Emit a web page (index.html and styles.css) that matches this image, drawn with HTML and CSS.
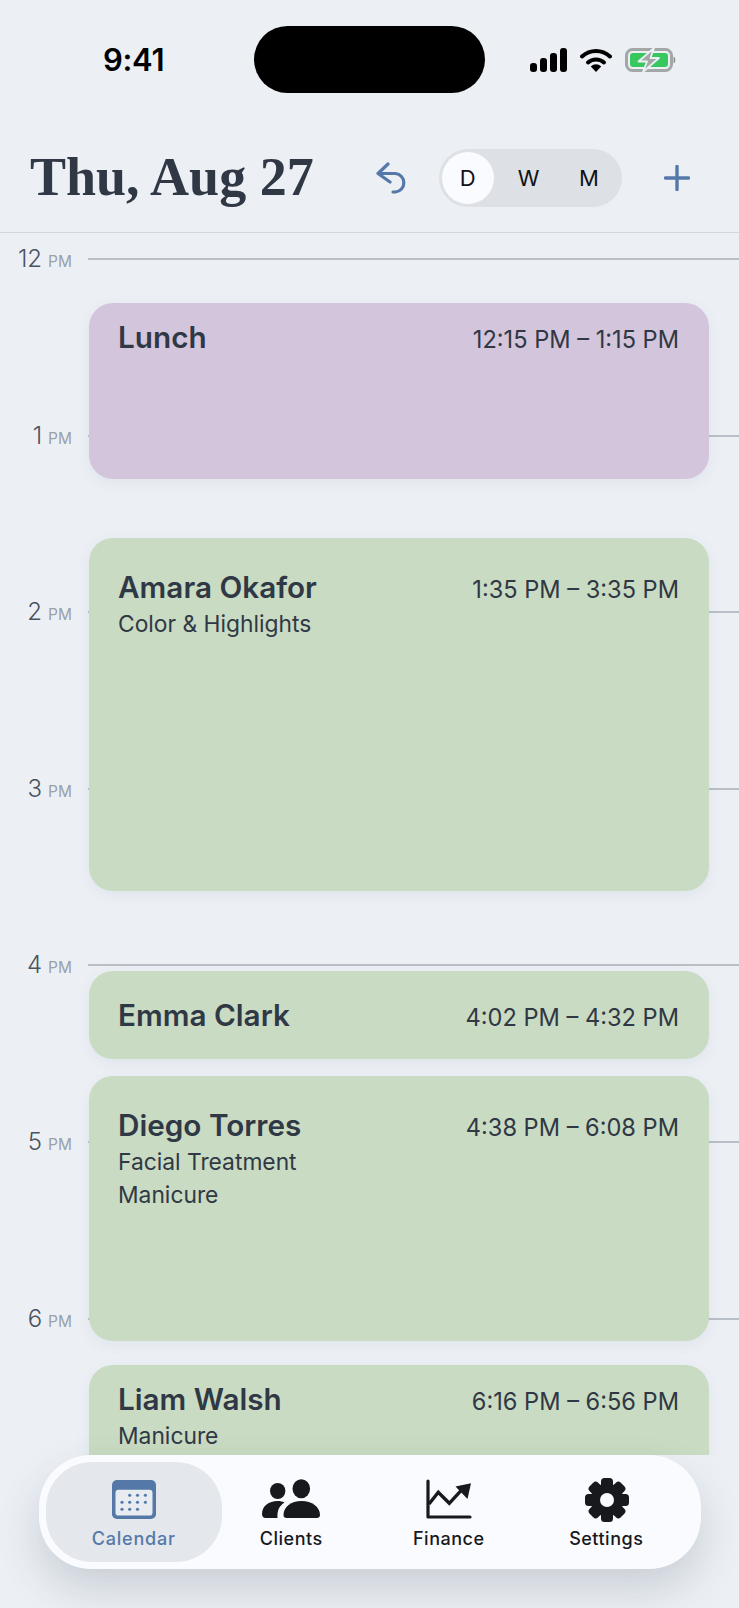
FILE: index.html
```html
<!DOCTYPE html>
<html lang="en">
<head>
<meta charset="utf-8">
<title>Calendar</title>
<link rel="stylesheet" href="styles.css">
</head>
<body>
<div class="phone">
  <div class="status">
    <span class="clock">9:41</span>
    <span class="island"></span>
    <div class="status-icons">
      <svg class="ic-signal" width="37" height="24" viewBox="0 0 37 24"><rect x="0" y="15" width="7" height="9" rx="3"/><rect x="10" y="10" width="7" height="14" rx="3"/><rect x="20" y="5" width="7" height="19" rx="3"/><rect x="30" y="0" width="7" height="24" rx="3"/></svg>
      <svg class="ic-wifi" width="32" height="24" viewBox="0 0 32 24"><path d="M2 8.500C10 1 22 1 30 8.500" fill="none" stroke="#000" stroke-width="4" stroke-linecap="round"/><path d="M8 14.500C12.500 10.500 19.500 10.500 24 14.500" fill="none" stroke="#000" stroke-width="4" stroke-linecap="round"/><path d="M10.800 18.500C14 15.600 18 15.600 21.200 18.500L16 24Z" fill="#000"/></svg>
      <svg class="ic-battery" width="52" height="24" viewBox="0 0 52 24"><rect x="1.500" y="1.500" width="45" height="21" rx="6" fill="none" stroke="#a3a8a7" stroke-width="3"/><rect x="5" y="5" width="38" height="14" rx="3" fill="#37c75f"/><path d="M48.500 8.500c2.500 .5 2.500 6.500 0 7z" fill="#8f9494"/><path d="M29 0L13.500 13.500h8.500l-4 10.500 16-14h-8.500z" fill="#a3a8a7" stroke="#ecf0f5" stroke-width="1.800" stroke-linejoin="round"/></svg>
    </div>
  </div>

  <header class="header">
    <h1 class="title">Thu, Aug 27</h1>
    <svg class="ic-undo" width="32" height="32" viewBox="0 0 32 32"><path d="M12 2L2 11.500L14 20M2 11.500H19.500A9.300 9.300 0 0 1 19.500 30H17" fill="none" stroke="#5479a8" stroke-width="3.200" stroke-linecap="round" stroke-linejoin="round"/></svg>
    <div class="segment">
      <span class="seg seg-on">D</span>
      <span class="seg">W</span>
      <span class="seg">M</span>
    </div>
    <svg class="ic-plus" width="26" height="26" viewBox="0 0 26 26"><path d="M13 1.500V24.500M1.500 13H24.500" fill="none" stroke="#5479a8" stroke-width="3.400" stroke-linecap="round"/></svg>
  </header>

  <main class="timeline">
    <div class="hour"><span class="hour-label">12<small>PM</small></span><span class="hour-line"></span></div>
    <div class="hour"><span class="hour-label">1<small>PM</small></span><span class="hour-line"></span></div>
    <div class="hour"><span class="hour-label">2<small>PM</small></span><span class="hour-line"></span></div>
    <div class="hour"><span class="hour-label">3<small>PM</small></span><span class="hour-line"></span></div>
    <div class="hour"><span class="hour-label">4<small>PM</small></span><span class="hour-line"></span></div>
    <div class="hour"><span class="hour-label">5<small>PM</small></span><span class="hour-line"></span></div>
    <div class="hour"><span class="hour-label">6<small>PM</small></span><span class="hour-line"></span></div>

    <article class="event lunch tight" style="top:70px;height:176px">
      <div class="event-row"><span class="name">Lunch</span><span class="time">12:15 PM – 1:15 PM</span></div>
    </article>
    <article class="event roomy" style="top:305px;height:353px">
      <div class="event-row"><span class="name">Amara Okafor</span><span class="time">1:35 PM – 3:35 PM</span></div>
      <div class="sub">Color &amp; Highlights</div>
    </article>
    <article class="event centered" style="top:738px;height:88px">
      <div class="event-row"><span class="name">Emma Clark</span><span class="time">4:02 PM – 4:32 PM</span></div>
    </article>
    <article class="event roomy" style="top:843px;height:265px">
      <div class="event-row"><span class="name">Diego Torres</span><span class="time">4:38 PM – 6:08 PM</span></div>
      <div class="sub">Facial Treatment</div>
      <div class="sub">Manicure</div>
    </article>
    <article class="event tight" style="top:1132px;height:117px">
      <div class="event-row"><span class="name">Liam Walsh</span><span class="time">6:16 PM – 6:56 PM</span></div>
      <div class="sub">Manicure</div>
    </article>
  </main>

  <nav class="tabbar">
    <a class="tab tab-on">
      <svg width="44" height="39" viewBox="0 0 44 40" preserveAspectRatio="none"><rect width="44" height="40" rx="5" fill="#5479a8"/><rect x="3.500" y="10" width="37" height="26.500" rx="3" fill="#e8ebf0"/><g fill="#5479a8"><circle cx="17.700" cy="15.600" r="1.600"/><circle cx="25.500" cy="15.600" r="1.600"/><circle cx="33.400" cy="15.600" r="1.600"/><circle cx="10" cy="22.800" r="1.600"/><circle cx="17.700" cy="22.800" r="1.600"/><circle cx="25.500" cy="22.800" r="1.600"/><circle cx="33.400" cy="22.800" r="1.600"/><circle cx="10" cy="30" r="1.600"/><circle cx="17.700" cy="30" r="1.600"/><circle cx="25.500" cy="30" r="1.600"/></g></svg>
      <span>Calendar</span>
    </a>
    <a class="tab">
      <svg width="58" height="40" viewBox="0 0 58 40"><g fill="#17191d"><ellipse cx="15.700" cy="12" rx="7.700" ry="8"/><ellipse cx="39.300" cy="9.800" rx="8.800" ry="9.500"/><path d="M0 35C0 27 7 22 15.500 22C18.500 22 20.500 22.500 22.500 23.500C17.500 26.500 15 31.500 15.500 39H3.500C1.500 39 0 37.500 0 35Z"/><path d="M21.500 36C21.500 28 29 22 39.500 22C50 22 58 28 58 36C58 38 56.500 39 55 39H24.500C22.500 39 21.500 38 21.500 36Z"/></g></svg>
      <span>Clients</span>
    </a>
    <a class="tab">
      <svg width="46" height="40" viewBox="0 0 46 40"><path d="M2 2V38H44" fill="none" stroke="#17191d" stroke-width="3.200" stroke-linecap="round" stroke-linejoin="round"/><path d="M3 25L12.300 13.300L23.300 24.300L35 11.700" fill="none" stroke="#17191d" stroke-width="3.400"/><path d="M29.500 7.500L45 4.300L41.500 20Z" fill="#17191d"/></svg>
      <span>Finance</span>
    </a>
    <a class="tab">
      <svg width="46" height="46" viewBox="0 0 46 46" class="ic-gear"><g fill="#17191d"><circle cx="23" cy="23" r="16.500"/><rect x="17" y="1" width="12" height="44" rx="3.500"/><rect x="17" y="1" width="12" height="44" rx="3.500" transform="rotate(45 23 23)"/><rect x="17" y="1" width="12" height="44" rx="3.500" transform="rotate(90 23 23)"/><rect x="17" y="1" width="12" height="44" rx="3.500" transform="rotate(135 23 23)"/></g><circle cx="23" cy="23" r="7" fill="#fafbff"/></svg>
      <span>Settings</span>
    </a>
  </nav>
</div>
</body>
</html>
```

FILE: styles.css
```css
* { box-sizing: border-box; }
html, body { margin: 0; padding: 0; }
body { background: #ecf0f5; font-family: Inter, "Noto Sans", sans-serif; color: #303845; }

.phone {
  width: 739px;
  height: 1608px;
  overflow: hidden;
  display: flex;
  flex-direction: column;
  background: #ecf0f5;
}

/* status bar */
.status {
  height: 140px;
  padding-top: 26px;
  display: flex;
  align-items: flex-start;
}
.clock {
  width: 254px;
  padding-left: 103px;
  margin-top: 15px;
  font-size: 31px;
  line-height: 38px;
  font-weight: 600;
  color: #000;
  letter-spacing: -0.3px;
}
.island {
  width: 231px;
  height: 67px;
  border-radius: 34px;
  background: #000;
}
.status-icons {
  display: flex;
  align-items: center;
  margin-left: 45px;
  margin-top: 22px;
  height: 24px;
}
.ic-signal { margin-right: 13px; }
.ic-wifi { margin-right: 13px; }

/* header */
.header {
  height: 93px;
  display: flex;
  align-items: flex-start;
  border-bottom: 1.5px solid #d3d7dc;
}
.title {
  margin: 9px 0 0 30px;
  width: 347px;
  font-family: "Liberation Serif", serif;
  font-weight: 700;
  font-size: 54px;
  line-height: 56px;
  color: #303845;
}
.ic-undo { margin: 22px 0 0 -1px; }
.segment {
  width: 183px;
  height: 58px;
  margin: 9px 0 0 31px;
  padding: 3px;
  border-radius: 29px;
  background: #dde0e5;
  display: flex;
}
.seg {
  width: 62px;
  height: 52px;
  display: flex;
  align-items: center;
  justify-content: center;
  font-size: 22px;
  font-weight: 400;
  color: #101216;
}
.seg-on {
  width: 53px;
  border-radius: 26px;
  background: #fafbff;
  margin-right: 5px;
}
.ic-plus { margin: 25px 0 0 42px; }

/* timeline */
.timeline {
  position: relative;
  flex: 1;
  min-height: 0;
  overflow: hidden;
  padding-top: 12px;
}
.hour {
  height: 176.600px;
  display: flex;
  align-items: flex-start;
}
.hour-label {
  width: 72px;
  height: 28px;
  line-height: 28px;
  text-align: right;
  font-size: 24px;
  font-weight: 300;
  color: #4a535e;
  white-space: nowrap;
}
.hour-label small {
  font-size: 15.500px;
  font-weight: 400;
  color: #9aa1a9;
  margin-left: 6px;
}
.hour-line {
  flex: 1;
  height: 2px;
  margin: 13px 0 0 16px;
  background: #b9bfc8;
}
.event {
  position: absolute;
  left: 89px;
  width: 620px;
  padding-left: 29px;
  padding-right: 30px;
  border-radius: 24px;
  background: #c9dbc2;
  box-shadow: 0 4px 14px rgba(70, 80, 110, 0.07);
}
.lunch { background: #d3c5dc; }
.tight { padding-top: 14px; }
.roomy { padding-top: 29px; }
.centered { padding-top: 24px; }
.event-row {
  display: flex;
  justify-content: space-between;
  align-items: baseline;
}
.name {
  font-size: 29.700px;
  line-height: 40px;
  font-weight: 600;
  color: #303845;
}
.time {
  font-size: 23.600px;
  font-weight: 400;
  color: #303845;
}
.sub {
  font-size: 22.800px;
  line-height: 33px;
  color: #303845;
}

/* tab bar */
.tabbar {
  position: relative;
  flex: none;
  width: 662px;
  height: 114px;
  margin: 0 0 39px 39px;
  padding: 7px 16px;
  border-radius: 52px;
  background: #fafbff;
  box-shadow: 0 20px 42px rgba(50, 60, 80, 0.18);
  display: grid;
  grid-template-columns: repeat(4, 157.500px);
}
.tab {
  display: flex;
  flex-direction: column;
  align-items: center;
  justify-content: flex-end;
  padding-bottom: 11px;
  font-size: 18px;
  line-height: 24px;
  font-weight: 500;
  letter-spacing: 0.5px;
  color: #17191d;
}
.tab svg { margin-bottom: 8px; display: block; }
.tab .ic-gear { margin-bottom: 4px; position: relative; left: 1px; }
.tab-on {
  margin: 0 -9px;
  border-radius: 46px;
  background: #e4e7ec;
  color: #5479a8;
  letter-spacing: 0.8px;
}
```
